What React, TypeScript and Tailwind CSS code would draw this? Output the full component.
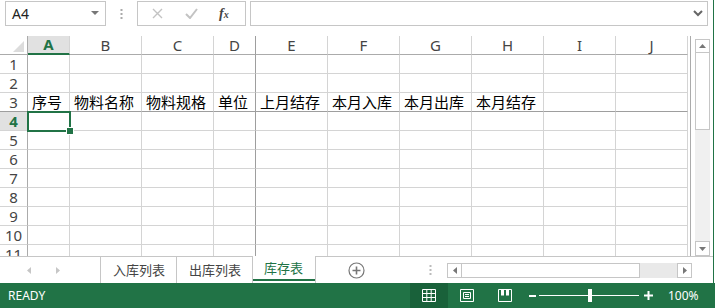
import clsx from "clsx";

const cols = [
  { key: "A", w: "w-[42px]" },
  { key: "B", w: "w-[72px]" },
  { key: "C", w: "w-[72px]" },
  { key: "D", w: "w-[42px]" },
  { key: "E", w: "w-[72px]" },
  { key: "F", w: "w-[72px]" },
  { key: "G", w: "w-[72px]" },
  { key: "H", w: "w-[72px]" },
  { key: "I", w: "w-[72px]" },
  { key: "J", w: "w-[72px]" },
];

const row3: Record<string, string> = {
  A: "序号",
  B: "物料名称",
  C: "物料规格",
  D: "单位",
  E: "上月结存",
  F: "本月入库",
  G: "本月出库",
  H: "本月结存",
};

const rows = [1, 2, 3, 4, 5, 6, 7, 8, 9, 10, 11];

const cjk = "font-['Noto_Sans_CJK_SC',sans-serif]";

const TopBar = () => (
  <div className="flex h-[36px] items-start pt-[1px] pl-[5px]">
    <div className="flex h-[25px] w-[101px] items-center justify-between border border-[#c6c6c6] pl-[6px] pr-[6px]">
      <span className="text-[14px] text-[#222] font-['Noto_Sans',sans-serif]">A4</span>
      <svg width="8" height="5" viewBox="0 0 8 5">
        <path d="M0 0h8L4 4z" fill="#777" />
      </svg>
    </div>
    <div className="flex h-[25px] w-[31px] items-center justify-center">
      <svg width="3" height="10" viewBox="0 0 3 10">
        <rect x="0.5" y="0" width="2" height="2" fill="#aaa" />
        <rect x="0.5" y="4" width="2" height="2" fill="#aaa" />
        <rect x="0.5" y="8" width="2" height="2" fill="#aaa" />
      </svg>
    </div>
    <div className="flex h-[25px] w-[109px] items-center border border-[#c6c6c6]">
      <svg className="ml-[14px]" width="11" height="11" viewBox="0 0 11 11">
        <path d="M1 1l9 9M10 1l-9 9" stroke="#c3c3c3" strokeWidth="1.4" />
      </svg>
      <svg className="ml-[22px]" width="13" height="11" viewBox="0 0 13 11">
        <path d="M1 6l4 4 7-9" stroke="#c3c3c3" strokeWidth="2" fill="none" />
      </svg>
      <span className="ml-[21px] text-[14px] font-bold italic text-[#444] font-['Liberation_Serif',serif]">
        f<span className="text-[10px]">x</span>
      </span>
    </div>
    <div className="ml-[4px] flex h-[25px] w-[458px] items-center justify-end border border-[#c6c6c6] pr-[4px]">
      <svg width="10" height="7" viewBox="0 0 10 7">
        <path d="M1 1l4 4 4-4" stroke="#666" strokeWidth="2" fill="none" />
      </svg>
    </div>
  </div>
);

const Sheet = () => (
  <div className="flex h-[220px]">
    <div className="w-[691px] overflow-hidden border-r border-[#ababab]">
      <div className="grid grid-cols-[28px_42px_72px_72px_42px_72px_72px_72px_72px_72px_72px] auto-rows-[19px]">
        <div className="relative border-b border-r border-[#ababab]">
          <svg className="absolute right-[3px] bottom-[2px]" width="11" height="11" viewBox="0 0 11 11">
            <path d="M11 0v11H0z" fill="#dcdcdc" />
          </svg>
        </div>
        {cols.map((c) => (
          <div
            key={c.key}
            className={clsx(
              "flex items-center justify-center border-r text-[15px] font-['Noto_Sans',sans-serif] leading-none",
              c.key === "A"
                ? "bg-[#e1e1e1] border-b-2 border-b-[#217346] text-[#217346] font-bold"
                : "border-b border-b-[#ababab] text-[#444]",
              c.key === "D" ? "border-r-[#9e9e9e]" : "border-r-[#d4d4d4]"
            )}
          >
            {c.key}
          </div>
        ))}
        {rows.map((r) => (
          <Row key={r} r={r} />
        ))}
      </div>
    </div>
    <div className="ml-[4px] mt-[3px] flex w-[15px] flex-col">
      <div className="flex h-[14px] items-center justify-center border border-[#c6c6c6]">
        <svg width="7" height="4" viewBox="0 0 7 4">
          <path d="M0 4h7L3.5 0z" fill="#777" />
        </svg>
      </div>
      <div className="h-[77px] border border-t-0 border-[#c6c6c6] bg-white" />
      <div className="flex-1 bg-[#f0f0f0]" />
      <div className="flex h-[15px] items-center justify-center border border-[#c6c6c6]">
        <svg width="7" height="4" viewBox="0 0 7 4">
          <path d="M0 0h7L3.5 4z" fill="#777" />
        </svg>
      </div>
    </div>
  </div>
);

const Row = ({ r }: { r: number }) => (
  <>
    <div
      className={clsx(
        "flex items-center justify-center border-r border-r-[#ababab] border-b text-[15px] font-['Noto_Sans',sans-serif] leading-none",
        r === 4 ? "bg-[#e1e1e1] text-[#217346] font-bold" : "text-[#444]",
        r === 3 ? "border-b-[#9e9e9e]" : "border-b-[#d4d4d4]"
      )}
    >
      {r}
    </div>
    {cols.map((c) => (
      <div
        key={c.key}
        className={clsx(
          "relative flex items-end overflow-visible whitespace-nowrap border-r border-b pl-[4px] pb-[1px] text-[15px] leading-[17px] text-black",
          cjk,
          c.key === "D" ? "border-r-[#9e9e9e]" : "border-r-[#d4d4d4]",
          r === 3 ? "border-b-[#9e9e9e]" : "border-b-[#d4d4d4]"
        )}
      >
        {r === 3 ? row3[c.key] : ""}
        {r === 4 && c.key === "A" && (
          <div className="absolute left-[-1px] top-[-1px] z-10 h-[21px] w-[44px] border-2 border-[#217346]">
            <div className="absolute right-[-5px] bottom-[-5px] h-[8px] w-[8px] border border-white bg-[#217346]" />
          </div>
        )}
      </div>
    ))}
  </>
);

const TabBar = () => (
  <div className="flex h-[27px] items-start">
    <div className="flex h-full w-[100px] items-center border-t border-[#c6c6c6]">
      <svg className="ml-[27px]" width="4" height="7" viewBox="0 0 4 7">
        <path d="M4 0v7L0 3.5z" fill="#c6c6c6" />
      </svg>
      <svg className="ml-[25px]" width="4" height="7" viewBox="0 0 4 7">
        <path d="M0 0v7l4-3.5z" fill="#c6c6c6" />
      </svg>
    </div>
    <div className={clsx("flex h-full w-[76px] items-center border-t border-l border-[#c6c6c6] pl-[12px] text-[13px] text-[#444]", cjk)}>
      入库列表
    </div>
    <div className={clsx("flex h-full w-[76px] items-center border-t border-l border-[#c6c6c6] pl-[12px] text-[13px] text-[#444]", cjk)}>
      出库列表
    </div>
    <div className="flex h-full w-[64px] flex-col border-l border-r border-[#c6c6c6]">
      <div className={clsx("flex flex-1 items-center pl-[11px] text-[13px] text-[#217346]", cjk)}>库存表</div>
      <div className="mb-[2px] h-[2px] bg-[#217346]" />
    </div>
    <div className="flex h-full flex-1 items-center border-t border-[#c6c6c6]">
      <svg className="ml-[32px]" width="17" height="17" viewBox="0 0 17 17">
        <circle cx="8.5" cy="8.5" r="7.5" stroke="#777" strokeWidth="1.2" fill="none" />
        <path d="M8.5 4.5v8M4.5 8.5h8" stroke="#777" strokeWidth="1.6" />
      </svg>
      <svg className="ml-[64px]" width="3" height="10" viewBox="0 0 3 10">
        <rect x="0.5" y="0" width="2" height="2" fill="#bbb" />
        <rect x="0.5" y="4" width="2" height="2" fill="#bbb" />
        <rect x="0.5" y="8" width="2" height="2" fill="#bbb" />
      </svg>
      <div className="ml-[15px] flex h-[15px] w-[245px]">
        <div className="flex w-[15px] items-center justify-center border border-[#c6c6c6]">
          <svg width="4" height="7" viewBox="0 0 4 7">
            <path d="M4 0v7L0 3.5z" fill="#777" />
          </svg>
        </div>
        <div className="w-[178px] border-y border-r border-[#c6c6c6] bg-white" />
        <div className="flex-1 bg-[#e9e9e9]" />
        <div className="flex w-[15px] items-center justify-center border border-[#c6c6c6]">
          <svg width="4" height="7" viewBox="0 0 4 7">
            <path d="M0 0v7l4-3.5z" fill="#777" />
          </svg>
        </div>
      </div>
    </div>
  </div>
);

const StatusBar = () => (
  <div className="flex h-[25px] items-center bg-[#217346] text-white font-['Noto_Sans',sans-serif]">
    <span className="ml-[8px] w-[402px] text-[12px]">READY</span>
    <div className="flex h-full w-[38px] items-center justify-center bg-[#19613a]">
      <svg width="14" height="13" viewBox="0 0 14 13">
        <path d="M0.5 0.5h13v12h-13zM0.5 4.5h13M0.5 8.5h13M4.8 0.5v12M9.2 0.5v12" stroke="#fff" fill="none" />
      </svg>
    </div>
    <svg className="ml-[12px]" width="14" height="13" viewBox="0 0 14 13">
      <path d="M0.5 0.5h13v12h-13z" stroke="#fff" fill="none" />
      <path d="M3.5 3.5h7v6h-7zM5 5.5h4M5 7.5h4" stroke="#fff" fill="none" />
    </svg>
    <svg className="ml-[24px]" width="14" height="13" viewBox="0 0 14 13">
      <path d="M0.5 0.5h13v12h-13z" stroke="#fff" fill="none" />
      <path d="M3 0.5v6h3v-6M8 0.5v6h3v-6" fill="#fff" />
    </svg>
    <div className="ml-[17px] h-[2px] w-[7px] bg-white" />
    <div className="relative ml-[3px] flex h-[13px] w-[100px] items-center">
      <div className="h-px w-full bg-white" />
      <div className="absolute left-[49px] top-0 h-[13px] w-[4px] bg-white" />
    </div>
    <svg className="ml-[5px]" width="9" height="9" viewBox="0 0 9 9">
      <path d="M4.5 0v9M0 4.5h9" stroke="#fff" strokeWidth="2" />
    </svg>
    <span className="ml-[15px] text-[12px]">100%</span>
  </div>
);

export default function App() {
  return (
    <div className="h-[308px] w-[715px] overflow-hidden bg-white">
      <div className="w-[714px] border-r border-[#217346]">
        <TopBar />
        <Sheet />
        <TabBar />
      </div>
      <StatusBar />
    </div>
  );
}
